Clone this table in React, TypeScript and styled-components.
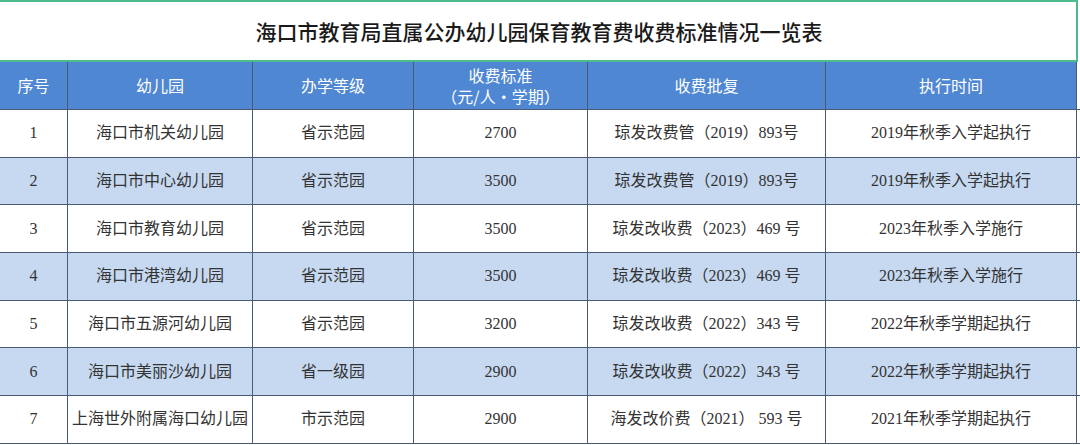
import React from "react";
import styled, { createGlobalStyle } from "styled-components";

const GlobalStyle = createGlobalStyle`
  html, body { margin: 0; padding: 0; background: #ffffff; }
  body { width: 1080px; height: 445px; overflow: hidden; }
  * { box-sizing: border-box; }
`;

const COLS = "68px 185px 161px 174px 238px 251px 3px";

const Page = styled.div`
  width: 1080px;
  height: 445px;
  display: flex;
  flex-direction: column;
  font-family: "Liberation Serif", "Noto Sans CJK SC", serif;
`;

const TitleBar = styled.div`
  height: 62px;
  width: 1078px;
  border-top: 2px solid #4cbc8e;
  border-right: 2px solid #4cbc8e;
  border-bottom: 2px solid #4cbc8e;
  display: flex;
  align-items: center;
  justify-content: center;
  padding-left: 2px;
  font-family: "Noto Sans CJK SC", "Noto Sans", sans-serif;
  font-size: 21px;
  font-weight: 500;
  color: #1a1a1a;
`;

const Row = styled.div<{ $alt?: boolean; $header?: boolean }>`
  display: grid;
  grid-template-columns: ${COLS};
  height: ${(p) => (p.$header ? "48px" : "47.7px")};
  background: ${(p) => (p.$header ? "#4f87d3" : p.$alt ? "#c6d9f1" : "#ffffff")};
  border-bottom: 1px solid #4a5a74;
`;

const Cell = styled.div<{ $header?: boolean }>`
  display: flex;
  align-items: center;
  justify-content: center;
  text-align: center;
  white-space: pre;
  border-right: 1.5px solid #4a5a74;
  font-family: ${(p) =>
    p.$header
      ? `"Noto Sans CJK SC", "Noto Sans", sans-serif`
      : `"Liberation Serif", "Noto Sans CJK SC", serif`};
  font-size: 16px;
  line-height: ${(p) => (p.$header ? "21px" : "20px")};
  color: ${(p) => (p.$header ? "#ffffff" : "#333333")};
`;

const Spacer = styled.div`
  background: #ffffff;
`;

const headers = ["序号", "幼儿园", "办学等级", "收费标准\n（元/人・学期）", "收费批复", "执行时间"];

const rows: string[][] = [
  ["1", "海口市机关幼儿园", "省示范园", "2700", "琼发改费管（2019）893号", "2019年秋季入学起执行"],
  ["2", "海口市中心幼儿园", "省示范园", "3500", "琼发改费管（2019）893号", "2019年秋季入学起执行"],
  ["3", "海口市教育幼儿园", "省示范园", "3500", "琼发改收费（2023）469 号", "2023年秋季入学施行"],
  ["4", "海口市港湾幼儿园", "省示范园", "3500", "琼发改收费（2023）469 号", "2023年秋季入学施行"],
  ["5", "海口市五源河幼儿园", "省示范园", "3200", "琼发改收费（2022）343 号", "2022年秋季学期起执行"],
  ["6", "海口市美丽沙幼儿园", "省一级园", "2900", "琼发改收费（2022）343 号", "2022年秋季学期起执行"],
  ["7", "上海世外附属海口幼儿园", "市示范园", "2900", "海发改价费（2021） 593 号", "2021年秋季学期起执行"],
];

export default function App() {
  return (
    <>
      <GlobalStyle />
      <Page>
        <TitleBar>海口市教育局直属公办幼儿园保育教育费收费标准情况一览表</TitleBar>
        <Row $header>
          {headers.map((h) => (
            <Cell $header key={h}>
              {h}
            </Cell>
          ))}
          <Spacer />
        </Row>
        {rows.map((r, i) => (
          <Row key={r[0]} $alt={i % 2 === 1}>
            {r.map((c, j) => (
              <Cell key={j}>{c}</Cell>
            ))}
            <Spacer />
          </Row>
        ))}
      </Page>
    </>
  );
}
